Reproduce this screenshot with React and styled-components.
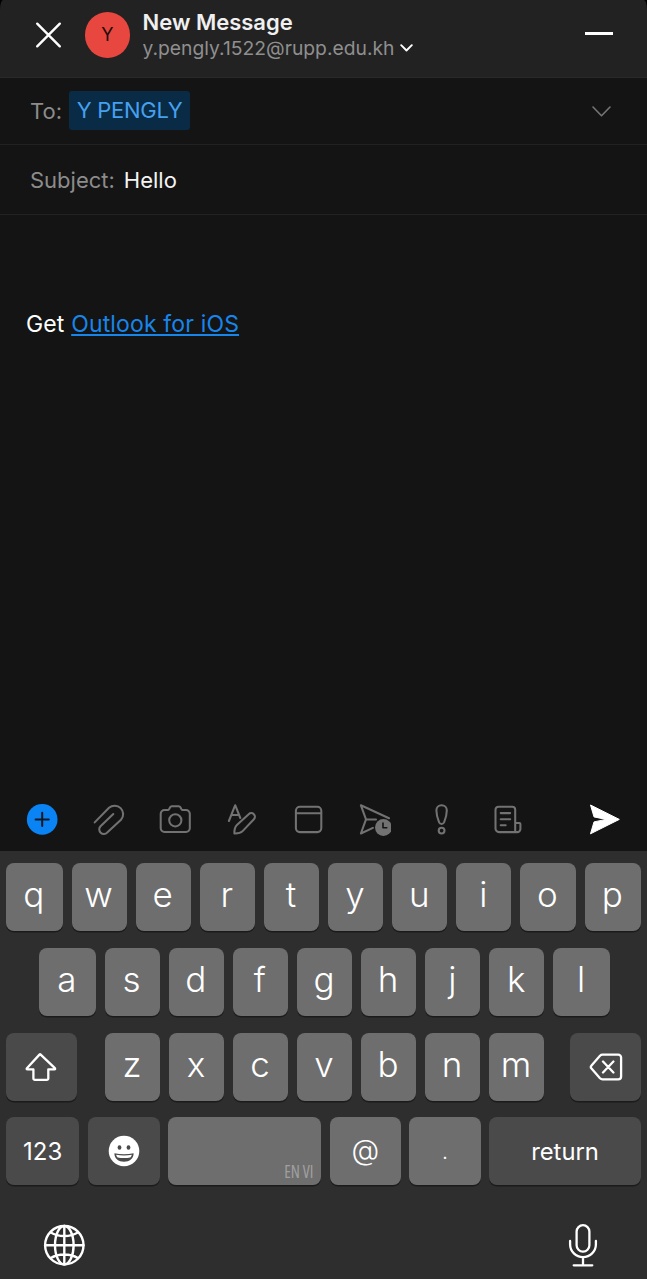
import React from "react";
import styled, { createGlobalStyle } from "styled-components";

const GlobalStyle = createGlobalStyle`
  html, body { margin: 0; background: #000; }
  * { box-sizing: border-box; }
  button { border: 0; padding: 0; margin: 0; background: none; font: inherit; color: inherit; display: block; }
  svg { display: block; flex: none; }
`;

const Screen = styled.div`
  width: 647px;
  height: 1279px;
  display: flex;
  flex-direction: column;
  overflow: hidden;
  background: #000;
  font-family: Inter, "Liberation Sans", sans-serif;
`;

const Header = styled.header`
  flex: none;
  height: 78px;
  display: flex;
  align-items: flex-start;
  padding: 12px 34.5px 0 34px;
  background: #222;
  border-bottom: 1px solid #292929;
  border-radius: 3px 3px 0 0 / 10px 10px 0 0;
`;

const CloseButton = styled.button`
  margin: 9px 22.5px 0 0;
`;

const Avatar = styled.div`
  width: 45.5px;
  height: 45.5px;
  flex: none;
  border-radius: 50%;
  background: #e8473f;
  color: #1c0b0a;
  font-size: 18px;
  line-height: 46px;
  text-align: center;
`;

const Account = styled.div`
  flex: 1;
  margin: -4px 0 0 12.5px;
`;

const Title = styled.h1`
  margin: 0;
  font-size: 22px;
  line-height: 29px;
  font-weight: 600;
  color: #f0f0f0;
  white-space: nowrap;
`;

const Address = styled.div`
  display: flex;
  align-items: center;
  gap: 6px;
  height: 22px;
  font-size: 19.3px;
  line-height: 22px;
  color: #8f8f8f;
  white-space: nowrap;
`;

const Minimize = styled.button`
  width: 27.5px;
  height: 3px;
  margin-top: 20px;
  background: #fff;
`;

const Field = styled.div`
  flex: none;
  height: ${(p) => p.$height}px;
  display: flex;
  align-items: center;
  padding: 0 36px 0 30px;
  background: #141414;
  border-bottom: 1px solid #222;
  font-size: 22px;
  color: #f4f4f4;
`;

const Label = styled.span`
  color: #8c8c8c;
  margin-right: ${(p) => p.$gap}px;
`;

const Recipient = styled.span`
  height: 39px;
  padding: 0 8px;
  margin: -2px auto 0 0;
  border-radius: 3px;
  background: #092b45;
  color: #47a0ee;
  line-height: 39px;
  letter-spacing: -0.3px;
`;

const Body = styled.main`
  flex: 1;
  padding: 95px 26px 0;
  background: #141414;
  color: #fff;
  font-size: 23px;
  line-height: 28px;
  letter-spacing: 0.15px;
`;

const Link = styled.a`
  color: #1885ea;
  text-decoration: underline;
  text-decoration-thickness: 1.5px;
  text-underline-offset: 2px;
  text-decoration-skip-ink: none;
`;

const Toolbar = styled.div`
  flex: none;
  height: 63px;
  display: flex;
  align-items: flex-start;
  gap: 34.5px;
  padding: 16px 26px 0;
  background: #141414;
  color: #727272;
`;

const Send = styled.button`
  margin-left: auto;
  color: #fff;
`;

const Keyboard = styled.section`
  flex: none;
  height: 428px;
  display: flex;
  flex-direction: column;
  padding: 12px 6px 0;
  background: #2e2e2e;
  color: #fff;
`;

const KeyRow = styled.div`
  display: grid;
  grid-template-columns: ${(p) => p.$columns};
  column-gap: ${(p) => p.$gap || 9}px;
  height: 68px;
  margin: 0 ${(p) => p.$right || 0}px ${(p) => p.$below || 17}px ${(p) => p.$left || 0}px;
`;

const Key = styled.button`
  height: 68px;
  display: flex;
  align-items: center;
  justify-content: center;
  padding: ${(p) => (p.$letter ? "0 1px 6px 0" : "0")};
  border-radius: 8px;
  background: ${(p) => (p.$dark ? "#4a4a4a" : "#6e6e6e")};
  box-shadow: 0 1.5px 0 #1b1b1b;
  font-size: ${(p) => p.$size || 35}px;
  font-weight: ${(p) => (p.$letter ? 300 : 400)};
`;

const SymbolKey = styled(Key)`
  padding: 0 0 ${(p) => p.$lift || 0}px;
  font-weight: 350;
`;

const SpaceKey = styled(Key)`
  align-items: flex-end;
  justify-content: flex-end;
  padding: 0 8px 3px;
  color: #a0a0a0;
`;

const Languages = styled.span`
  font-size: 18px;
  line-height: 22px;
  font-family: "Open Sans", Inter, sans-serif;
  font-stretch: 75%;
  white-space: nowrap;
  transform: scaleX(0.9);
  transform-origin: right center;
`;

const Dock = styled.div`
  display: flex;
  justify-content: space-between;
  padding: 22px 43px 0 37px;
`;

const Stroke = ({ w = 32, h = 32, sw = 2.05, children }) => (
  <svg width={w} height={h} viewBox={`0 0 ${w} ${h}`} fill="none" stroke="currentColor" strokeWidth={sw} strokeLinecap="round" strokeLinejoin="round">
    {children}
  </svg>
);

const PlusIcon = () => (
  <svg width="32" height="32" viewBox="0 0 32 32">
    <circle cx="16.2" cy="15.4" r="15.3" fill="#0a84f4" />
    <path d="M9.6 15.4h13.2M16.2 8.8V22" stroke="#101820" strokeWidth="2" strokeLinecap="round" />
  </svg>
);
const ClipIcon = () => (
  <Stroke>
    <path d="M1.7 18.4 16 3.8a8.5 8.5 0 0 1 12 12L14.2 28.6a4.5 4.5 0 0 1-6.7-6.3L20.3 10" />
  </Stroke>
);
const CameraIcon = () => (
  <Stroke>
    <path d="M5.5 6h3.2c.8 0 1.1-.4 1.5-1.1l.9-1.6c.4-.7.8-1 1.6-1h7.1c.8 0 1.2.3 1.6 1l.9 1.6c.4.7.7 1.1 1.5 1.1h3.2a3.8 3.8 0 0 1 3.8 3.8v14.4a3.8 3.8 0 0 1-3.8 3.8H5.5a3.8 3.8 0 0 1-3.8-3.8V9.8A3.8 3.8 0 0 1 5.5 6Z" />
    <circle cx="16.3" cy="16.3" r="6.1" />
  </Stroke>
);
const FormatIcon = () => (
  <Stroke>
    <path d="M2.9 17 9.2 1.2 14.3 14M5.4 11h7.4" />
    <path d="M8.4 29.5c-.1-3 .4-6.5 2.5-8.5L22.7 10.2a3.6 3.6 0 0 1 5.2 5.1L16.6 27.1c-2 2-5.4 2.5-8.2 2.4Z" />
  </Stroke>
);
const CalendarIcon = () => (
  <Stroke>
    <rect x="3.9" y="2.7" width="25.4" height="25.4" rx="4" />
    <path d="M4 9.3h25.2" />
  </Stroke>
);
const ScheduleIcon = () => (
  <Stroke>
    <path d="M30 14.3 1.9 1.3 7 15.4 1.9 29.5l12-5.6M7 15.4h10" />
    <circle cx="24.4" cy="23.5" r="8.4" fill="currentColor" stroke="none" />
    <path d="M24 19v4.7h3.8" stroke="#141414" strokeWidth="1.6" />
  </Stroke>
);
const PriorityIcon = () => (
  <Stroke>
    <path d="M16.6 1.3c-3 0-5.2 2.1-5.2 5.2 0 4 1.4 8.7 2.7 11.9.9 2 4.1 2 5 0 1.3-3.2 2.7-7.9 2.7-11.9 0-3.1-2.2-5.2-5.2-5.2Z" />
    <circle cx="16.6" cy="26.6" r="2.9" />
  </Stroke>
);
const TemplateIcon = () => (
  <Stroke>
    <path d="M23.2 28.1H7a3.5 3.5 0 0 1-3.5-3.5V5.7a3 3 0 0 1 3-3h13.7a3 3 0 0 1 3 3v22.4h2a3.2 3.2 0 0 0 3.2-3.2V20a1 1 0 0 0-1-1h-4.2M8.7 9.1h9.5M8.7 15.2h9.5M8.7 21.2h5" />
  </Stroke>
);
const SendIcon = () => (
  <svg width="32" height="32" viewBox="0 0 32 32" fill="currentColor" stroke="currentColor" strokeWidth="1" strokeLinejoin="round">
    <path d="M1.5 1 30.3 15.4 1.5 29.8 5 17.9 17 15.4 5 12.9Z" />
  </svg>
);
const ShiftIcon = () => (
  <Stroke w={34} h={30} sw={2.3}>
    <path d="M15.4 2.4 29.9 16.2c.5.6.3 1.2-.5 1.2H23.3v9a1.5 1.5 0 0 1-1.5 1.5H9.9a1.5 1.5 0 0 1-1.5-1.5v-9H2.4c-.8 0-1-.6-.5-1.2L14.7 2.4q.4-.4.7 0Z" />
  </Stroke>
);
const DeleteIcon = () => (
  <Stroke w={34} h={30} sw={2.3}>
    <path d="M13.4 2.6h15.8a2.9 2.9 0 0 1 2.9 2.9v18.9a2.9 2.9 0 0 1-2.9 2.9H13.4c-1 0-1.700-.4-2.400-1.100L2.500 16.500c-1-1.100-1-2 0-3.100L11 3.700c.7-.7 1.400-1.100 2.400-1.100ZM14 9.500l10.400 11M24.400 9.500 14 20.500" />
  </Stroke>
);
const EmojiIcon = () => (
  <svg width="32" height="32" viewBox="0 0 32 32">
    <circle cx="16" cy="16" r="15.3" fill="#fff" />
    <ellipse cx="11.5" cy="12.5" rx="1.9" ry="2.3" fill="#4a4a4a" />
    <ellipse cx="20.5" cy="12.5" rx="1.9" ry="2.3" fill="#4a4a4a" />
    <path d="M6.4 18.3c6 1.2 13.2 1.2 19.2 0 .2 5-4.2 8.5-9.6 8.5s-9.800-3.500-9.600-8.500Z" fill="#4a4a4a" />
    <path d="M8.1 19.8c5 .9 10.8.9 15.8 0-.5 1.500-1 2.200-1.600 2.600-4 .7-8.600.7-12.600 0-.6-.4-1.200-1.100-1.600-2.600Z" fill="#fff" />
  </svg>
);
const GlobeIcon = () => (
  <Stroke w={42} h={42} sw={2.4}>
    <circle cx="21.3" cy="21.2" r="19.2" />
    <ellipse cx="21.3" cy="21.2" rx="9.3" ry="19.2" />
    <path d="M21.3 2v38.4M2.1 21.2h38.4M7.8 8.4c7.5 4.7 19.5 4.7 27 0M7.8 34c7.5-4.7 19.5-4.7 27 0" />
  </Stroke>
);
const MicIcon = () => (
  <Stroke w={30} h={46} sw={2.3}>
    <rect x="8.6" y="0.2" width="12.800" height="26.4" rx="6.4" transform="translate(0 1)" />
    <path d="M2.100 17v3.300a12.900 12.900 0 0 0 25.800 0V17M15 33.200v7.800M5.700 41.300h18.600" />
  </Stroke>
);

const Letters = ({ keys }) => keys.split("").map((k) => <Key key={k} $letter>{k}</Key>);

export default function App() {
  return (
    <>
      <GlobalStyle />
      <Screen>
        <Header>
          <CloseButton aria-label="Close">
            <svg width="28" height="28" viewBox="0 0 28 28" stroke="#fff" strokeWidth="2.4" strokeLinecap="round">
              <path d="M3.2 2.7l22.6 22.6M25.8 2.7 3.2 25.3" />
            </svg>
          </CloseButton>
          <Avatar>Y</Avatar>
          <Account>
            <Title>New Message</Title>
            <Address>
              y.pengly.1522@rupp.edu.kh
              <svg width="13" height="8" viewBox="0 0 13 8" fill="none" stroke="#fff" strokeWidth="1.9" strokeLinecap="round" strokeLinejoin="round">
                <path d="M1.2 1.2l5.3 5.3 5.3-5.3" />
              </svg>
            </Address>
          </Account>
          <Minimize aria-label="Minimize" />
        </Header>
        <Field $height={67}>
          <Label $gap={6.8}>To:</Label>
          <Recipient>Y PENGLY</Recipient>
          <svg width="19" height="11" viewBox="0 0 19 11" fill="none" stroke="#757575" strokeWidth="1.6" strokeLinecap="round" strokeLinejoin="round">
            <path d="M1 1l8.5 8.7L18 1" />
          </svg>
        </Field>
        <Field $height={70}>
          <Label $gap={9}>Subject:</Label>
          Hello
        </Field>
        <Body>
          Get <Link>Outlook for iOS</Link>
        </Body>
        <Toolbar>
          <PlusIcon />
          <ClipIcon />
          <CameraIcon />
          <FormatIcon />
          <CalendarIcon />
          <ScheduleIcon />
          <PriorityIcon />
          <TemplateIcon />
          <Send aria-label="Send"><SendIcon /></Send>
        </Toolbar>
        <Keyboard>
          <KeyRow $columns="56.5px repeat(8, 1fr) 56.5px">
            <Letters keys="qwertyuiop" />
          </KeyRow>
          <KeyRow $left={33} $right={31} $columns="56.6px repeat(7, 1fr) 56.6px">
            <Letters keys="asdfghjkl" />
          </KeyRow>
          <KeyRow $below={16} $columns="71px 10px repeat(7, 1fr) 8px 71px">
            <Key $dark aria-label="Shift"><ShiftIcon /></Key>
            <span />
            <Letters keys="zxcvbnm" />
            <span />
            <Key $dark aria-label="Delete"><DeleteIcon /></Key>
          </KeyRow>
          <KeyRow $gap={8.2} $columns="73.4px 72.6px 1fr 71.5px 71.5px 152px">
            <Key $dark $size={24}>123</Key>
            <Key $dark aria-label="Emoji"><EmojiIcon /></Key>
            <SpaceKey aria-label="Space"><Languages>EN VI</Languages></SpaceKey>
            <SymbolKey $size={28.5} $lift={4}>@</SymbolKey>
            <SymbolKey $size={21}>.</SymbolKey>
            <Key $dark $size={23.8}>return</Key>
          </KeyRow>
          <Dock>
            <GlobeIcon />
            <MicIcon />
          </Dock>
        </Keyboard>
      </Screen>
    </>
  );
}
